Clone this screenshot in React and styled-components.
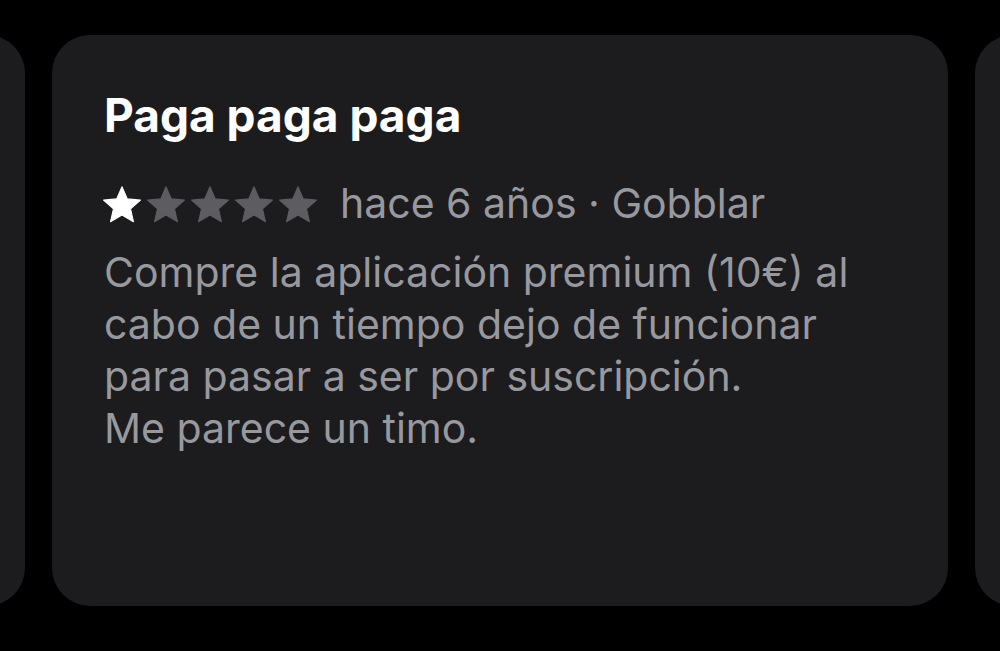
import React from 'react'
import styled, { createGlobalStyle } from 'styled-components'

const GlobalStyle = createGlobalStyle`
    html, body {
        margin: 0;
        padding: 0;
        background: #000;
    }
    body {
        font-family: Inter, "Noto Sans", "Liberation Sans", sans-serif;
        -webkit-font-smoothing: antialiased;
    }
`;

const review = {
    title: 'Paga paga paga',
    rating: 1,
    date: 'hace 6 años',
    author: 'Gobblar',
    lines: [
        'Compre la aplicación premium (10€) al',
        'cabo de un tiempo dejo de funcionar',
        'para pasar a ser por suscripción.',
        'Me parece un timo.',
    ],
}

function Star({ filled }) {
    return (
        <StarIcon viewBox="0 0 24 24" $filled={filled}>
            <path
                d="M12 1.6l3.05 6.9 7.5.72-5.66 4.98 1.66 7.36L12 17.7l-6.55 3.86 1.66-7.36L1.45 9.22l7.5-.72z"
                strokeLinejoin="round"
            />
        </StarIcon>
    )
}

function ReviewCard({ data }) {
    return (
        <Card>
            <Title>{data.title}</Title>
            <Meta>
                <Stars>
                    {[1, 2, 3, 4, 5].map(n => (
                        <Star key={n} filled={n <= data.rating} />
                    ))}
                </Stars>
                <MetaText>{data.date} · {data.author}</MetaText>
            </Meta>
            <Body>
                {data.lines.map((l, i) => <div key={i}>{l}</div>)}
            </Body>
        </Card>
    )
}

function App() {
    return (
        <>
            <GlobalStyle />
            <Carousel>
                <Card />
                <ReviewCard data={review} />
                <Card />
            </Carousel>
        </>
    )
}

const Carousel = styled.div`
    display: flex;
    justify-content: center;
    gap: 27px;
    overflow: hidden;
    width: 1000px;
    height: 651px;
    padding-top: 35px;
    box-sizing: border-box;
`;

const Card = styled.div`
    flex: 0 0 896px;
    height: 571px;
    background: #1c1c1e;
    border-radius: 38px;
    padding: 52px 52px 0 52px;
    box-sizing: border-box;
`;

const Title = styled.h1`
    margin: 0;
    color: #fff;
    font-size: 46px;
    font-weight: 700;
    line-height: 56px;
`;

const Meta = styled.div`
    display: flex;
    align-items: flex-start;
    margin-top: 32px;
    height: 50px;
`;

const Stars = styled.div`
    display: flex;
    gap: 2px;
    margin: 9px 0 0 -3.5px;
`;

const StarIcon = styled.svg`
    width: 42px;
    height: 42px;
    fill: ${p => (p.$filled ? '#ffffff' : '#5c5c61')};
    stroke: ${p => (p.$filled ? '#ffffff' : '#5c5c61')};
    stroke-width: 0.6;
`;

const MetaText = styled.span`
    margin: 3px 0 0 21.5px;
    color: #98989f;
    font-size: 41px;
    line-height: 50px;
`;

const Body = styled.div`
    margin-top: 21px;
    color: #98989f;
    font-size: 41px;
    line-height: 52px;
`;

export default App
